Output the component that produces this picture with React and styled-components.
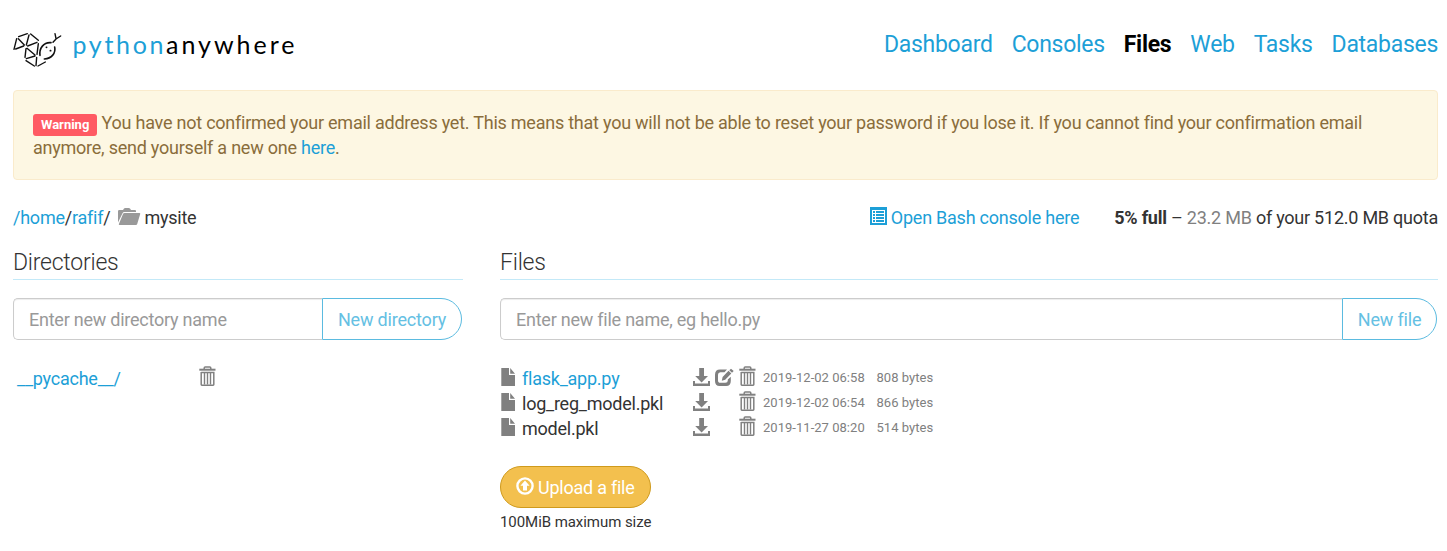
import React from "react";
import styled, { createGlobalStyle } from "styled-components";

const GlobalStyle = createGlobalStyle`
  * { box-sizing: border-box; }
  body {
    margin: 0;
    background: #fff;
    color: #333;
    font-family: Roboto, "Liberation Sans", sans-serif;
    font-size: 18px;
    line-height: 25px;
    letter-spacing: -0.236px;
    white-space: nowrap;
  }
`;

const Page = styled.div`
  width: 1447px;
  height: 551px;
  padding: 0 9px 0 13px;
  overflow: hidden;
`;
const Link = styled.a`
  color: #1d9fd7;
  text-decoration: none;
`;
const Header = styled.header`
  display: flex;
  justify-content: space-between;
  height: 90px;
`;
const Brand = styled.div`
  display: flex;
  padding-top: 27px;
`;
const Nav = styled.nav`
  display: flex;
  gap: 19px;
  padding-top: 29px;
  font-size: 23px;
  line-height: 32px;
  letter-spacing: -0.29px;
`;
const NavItem = styled.a`
  color: ${(p) => (p.$active ? "#000" : "#1d9fd7")};
  font-weight: ${(p) => (p.$active ? 700 : 400)};
`;
const Alert = styled.section`
  height: 90px;
  padding: 19px;
  border: 1px solid #faebcc;
  border-radius: 4px;
  background: #fdf7e3;
  color: #8a6d3b;
`;
const Badge = styled.span`
  display: inline-block;
  height: 22px;
  margin: -3px 0;
  padding: 0 8px;
  border-radius: 3px;
  background: #ff5a63;
  color: #fff;
  font-size: 13px;
  font-weight: 700;
  line-height: 21px;
  letter-spacing: 0;
`;
const PathBar = styled.div`
  display: flex;
  justify-content: space-between;
  height: 25px;
  margin-top: 25px;
`;
const Group = styled.div`
  display: flex;
`;
const Quota = styled.span`
  margin-left: 35px;
`;
const Muted = styled.span`
  color: #808080;
`;
const Columns = styled.main`
  display: grid;
  grid-template-columns: 450px 938px;
  column-gap: 37px;
  margin-top: 18px;
`;
const Heading = styled.h2`
  height: 32px;
  margin: 0 0 18px;
  border-bottom: 1px solid #c3e9f8;
  font-size: 23px;
  font-weight: 300;
  line-height: 30px;
`;
const InputGroup = styled.div`
  display: flex;
  height: 42px;
  margin-right: 1px;
`;
const Field = styled.div`
  flex: 1;
  padding: 0 15px;
  border: 1px solid #ccc;
  border-right: 0;
  border-radius: 5px 0 0 5px;
  box-shadow: inset 0 1px 1px rgba(0, 0, 0, 0.075);
  color: #999;
  line-height: 42px;
`;
const OutlineButton = styled.div`
  width: ${(p) => p.$width}px;
  border: 1px solid #5bbbe0;
  border-radius: 0 21px 21px 0;
  color: #65c0e3;
  line-height: 41px;
  letter-spacing: -0.18px;
  text-align: center;
`;
const DirRow = styled.div`
  display: grid;
  grid-template-columns: 182px 18px;
  margin: 26px 0 0 4px;
  height: 25px;
`;
const FileList = styled.div`
  margin-top: 26px;
`;
const FileRow = styled.div`
  display: grid;
  grid-template-columns: 22px 171px 21px 25px 24px 113.5px 80px;
  height: 25px;
`;
const Small = styled.span`
  color: #808080;
  font-size: 13px;
  line-height: 24px;
  letter-spacing: 0.03px;
`;
const UploadButton = styled.div`
  display: flex;
  width: 151px;
  height: 42px;
  margin-top: 25px;
  padding-left: 15px;
  border: 1px solid #cf9a1c;
  border-radius: 21px;
  background: #f3c04e;
  color: #fff;
  line-height: 41px;
`;
const Note = styled.div`
  margin-top: 2px;
  font-size: 15px;
  letter-spacing: -0.06px;
`;
const Glyph = styled.svg`
  flex: none;
  display: block;
  margin-top: ${(p) => p.$top || 0}px;
  margin-left: ${(p) => p.$left || 0}px;
  margin-right: ${(p) => p.$right || 0}px;
  color: ${(p) => p.$color || "#808080"};
`;

const Logo = () => (
  <Glyph width="52" height="42" viewBox="24 6 156 126" $color="#111">
    <g fill="none" stroke="currentColor" strokeWidth="4.200" strokeLinecap="round">
      <path d="M41 35 67 26M35 41 27 73M40 41 58 60M32 72 56 63M72 30 64 60M77 27 100 46M96 52 68 63M63 71 60 97M100 56 96 88M66 70 90 90M64 101 90 93M63 107 88 123M95 97 93 122M99 123 121 111" />
      <path d="M105 91C102 70 116 51 138 53M149 66C153 84 140 101 118 102" strokeWidth="4.800" />
      <path d="M150 26 153 41M167 33 153 42 144 52" />
      <path d="M124 67h1M136 77h1" strokeWidth="5" />
    </g>
  </Glyph>
);
const Wordmark = () => (
  <svg width="236" height="44" viewBox="0 0 236 44" fontFamily="Lato, sans-serif" fontSize="25" letterSpacing="0">
    <text x="7.500" y="27" fill="#1d9fd7" textLength="91">python</text>
    <text x="101" y="27" fill="#000" textLength="128.500">anywhere</text>
  </svg>
);
const FolderIcon = () => (
  <Glyph width="23" height="17" viewBox="0 0 23 17" $top={3} $left={8} $right={3} $color="#999">
    <path fill="currentColor" d="M0 14.500V3.200Q0 2 1.200 2H5L6 .6Q6.400 0 7.200 0h3.600q.8 0 1.200.6L13 2h4q1 0 1 1v1H6.500Q5 4 4.400 5.400ZM6.600 5H21.500q1 0 .7 1L19.200 16q-.3 1-1.300 1H1.500q-1 0-.6-1L5 6q.4-1 1.600-1Z" />
  </Glyph>
);
const ListIcon = () => (
  <Glyph width="17" height="18" viewBox="0 0 17 18" $top={2} $right={3.500} $color="#1d9fd7">
    <path fill="currentColor" d="M0 0h17v18H0Z" />
    <path fill="#fff" d="M2 3h13v13H2Z" />
    <path fill="currentColor" d="M3 4h2v2H3ZM6 4h8v2H6ZM3 7h2v2H3ZM6 7h8v2H6ZM3 10h2v2H3ZM6 10h8v2H6ZM3 13h2v2H3ZM6 13h8v2H6Z" />
  </Glyph>
);
const FileIcon = () => (
  <Glyph width="14" height="18" viewBox="0 0 14 18" $top={2} $left={1}>
    <path fill="currentColor" d="M.3 0H8v7h6v11H.3ZM9.200 0 14 5.800H9.200Z" />
  </Glyph>
);
const DownloadIcon = () => (
  <Glyph width="17" height="18" viewBox="0 0 17 18" $top={2}>
    <path fill="currentColor" d="M6.200 0h4.800v8H15l-6.400 6.500L2.200 8h4ZM0 13h2v2.500h13V13h2v5H0Z" />
  </Glyph>
);
const EditIcon = () => (
  <Glyph width="19" height="18" viewBox="0 0 19 18" $top={2} $left={0.500}>
    <path fill="currentColor" d="M5 1.500h7L9.500 4.300H5.400Q3 4.300 3 6.800v5.400q0 2.600 2.400 2.600h4.900q2.500 0 2.500-2.300v-1l3-2.800v4.300q0 5-4.600 5H4.600Q0 18 0 13V6.700Q0 1.500 5 1.500ZM6.800 12.700l.8-3.700L13.500 2.800l2.800 2.700-6.100 6.300ZM14.300 2.300 16 .8l2.700 2.200-1.700 1.800Z" />
  </Glyph>
);
const TrashIcon = () => (
  <Glyph width="17" height="20" viewBox="0 0 17 20">
    <g fill="none" stroke="currentColor">
      <path d="M5.200 3V1.900Q5.200.9 6.200.9h4.600q1 0 1 1V3" strokeWidth="1.500" />
      <path d="M.3 3.700H16.500" strokeWidth="2" />
      <path d="M2.200 6V18.500q0 .7.7.7h11.200q.7 0 .7-.7V6.500H2.200" strokeWidth="1.500" />
      <path d="M5.500 7V18.500M8.500 7V18.500M11.500 7V18.500" strokeWidth="1.400" />
    </g>
  </Glyph>
);
const UploadIcon = () => (
  <Glyph width="18" height="18" viewBox="0 0 18 18" $top={10} $right={4} $color="#fff">
    <circle cx="9" cy="9" r="7.600" fill="none" stroke="currentColor" strokeWidth="2.400" />
    <path fill="currentColor" d="m9 3.500 4.600 5.300H11v4.700H7V8.800H4.400Z" />
  </Glyph>
);

const navItems = ["Dashboard", "Consoles", "Files", "Web", "Tasks", "Databases"];
const files = [
  { name: "flask_app.py", editable: true, date: "2019-12-02 06:58", size: "808 bytes" },
  { name: "log_reg_model.pkl", date: "2019-12-02 06:54", size: "866 bytes" },
  { name: "model.pkl", date: "2019-11-27 08:20", size: "514 bytes" },
];

export default function App() {
  return (
    <Page>
      <GlobalStyle />
      <Header>
        <Brand>
          <Logo />
          <Wordmark />
        </Brand>
        <Nav>
          {navItems.map((n) => (
            <NavItem key={n} $active={n === "Files"}>{n}</NavItem>
          ))}
        </Nav>
      </Header>
      <Alert>
        <Badge>Warning</Badge> You have not confirmed your email address yet. This means that you will not be able to
        reset your password if you lose it. If you cannot find your confirmation email
        <br />
        anymore, send yourself a new one <Link>here</Link>.
      </Alert>
      <PathBar>
        <Group>
          <span><Link>/home</Link>/<Link>rafif</Link>/</span>
          <FolderIcon />
          <span>mysite</span>
        </Group>
        <Group>
          <ListIcon />
          <Link>Open Bash console here</Link>
          <Quota><b>5% full</b> – <Muted>23.2 MB</Muted> of your 512.0 MB quota</Quota>
        </Group>
      </PathBar>
      <Columns>
        <section>
          <Heading>Directories</Heading>
          <InputGroup>
            <Field>Enter new directory name</Field>
            <OutlineButton $width={140}>New directory</OutlineButton>
          </InputGroup>
          <DirRow>
            <Link>__pycache__/</Link>
            <TrashIcon />
          </DirRow>
        </section>
        <section>
          <Heading>Files</Heading>
          <InputGroup>
            <Field>Enter new file name, eg hello.py</Field>
            <OutlineButton $width={95}>New file</OutlineButton>
          </InputGroup>
          <FileList>
            {files.map((f) => (
              <FileRow key={f.name}>
                <FileIcon />
                {f.editable ? <Link>{f.name}</Link> : <span>{f.name}</span>}
                <DownloadIcon />
                {f.editable ? <EditIcon /> : <span />}
                <TrashIcon />
                <Small>{f.date}</Small>
                <Small>{f.size}</Small>
              </FileRow>
            ))}
          </FileList>
          <UploadButton>
            <UploadIcon />
            Upload a file
          </UploadButton>
          <Note>100MiB maximum size</Note>
        </section>
      </Columns>
    </Page>
  );
}
